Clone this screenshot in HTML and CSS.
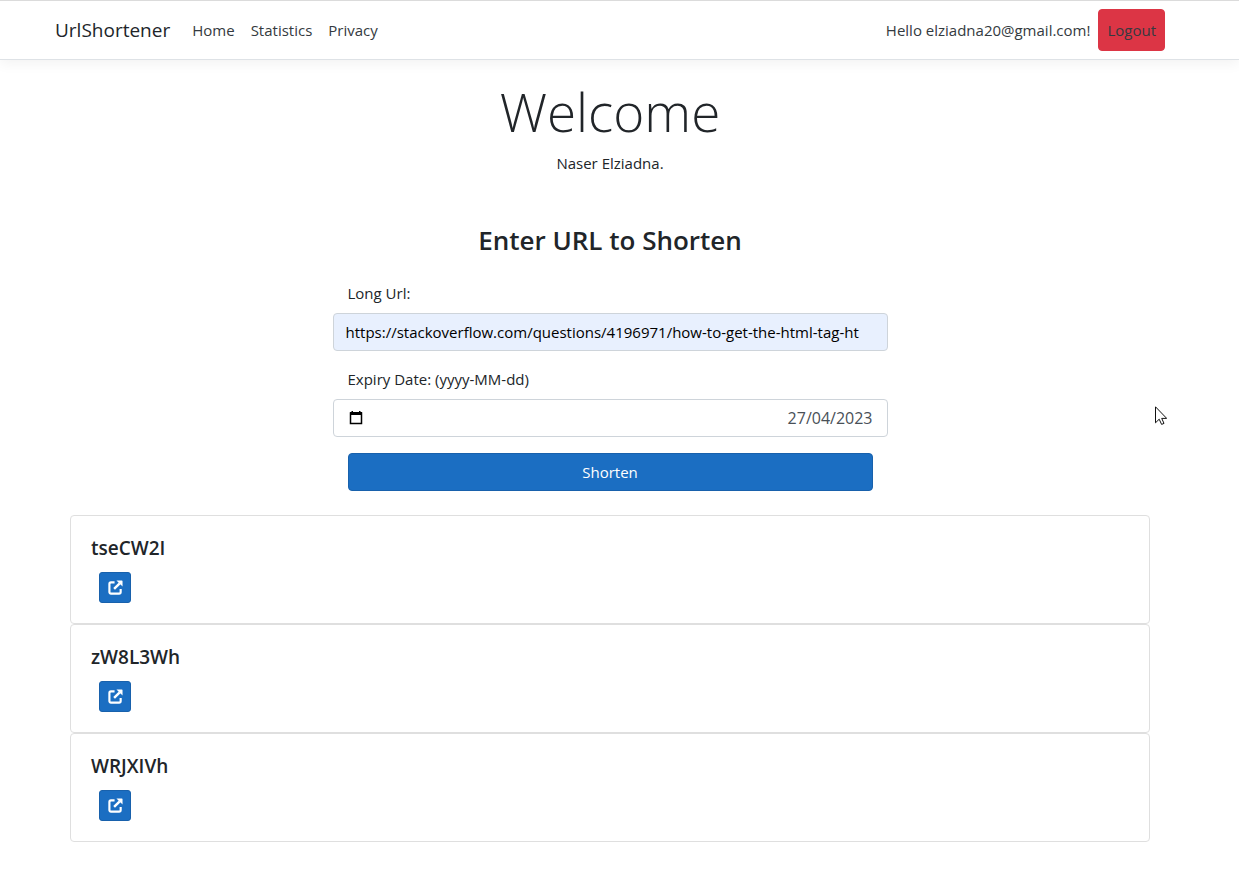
FILE: index.html
```html
<!DOCTYPE html>
<html lang="en">
<head>
<meta charset="utf-8">
<title>Home Page - UrlShortener</title>
<link rel="stylesheet" href="styles.css">
</head>
<body>
<svg class="sprite" aria-hidden="true">
  <symbol id="open-link" viewBox="0 0 16 16">
    <path d="M7 2.5H3.2a1.7 1.7 0 0 0-1.7 1.7v8.600a1.7 1.7 0 0 0 1.7 1.7h8.600a1.7 1.7 0 0 0 1.7-1.700V9.500" fill="none" stroke="currentColor" stroke-width="2.300"/>
    <path d="M6.500 9.500 12.500 3.500" fill="none" stroke="currentColor" stroke-width="2.600"/>
    <path d="M9 .5h5.800a.7.7 0 0 1 .7.7V7z" fill="currentColor"/>
  </symbol>
</svg>
<header class="site-header">
  <nav class="container navbar">
    <a class="brand" href="#">UrlShortener</a>
    <div class="nav-links">
      <a href="#">Home</a>
      <a href="#">Statistics</a>
      <a href="#">Privacy</a>
    </div>
    <div class="account">
      <a class="greeting" href="#">Hello elziadna20@gmail.com!</a>
      <button class="logout" type="button">Logout</button>
    </div>
  </nav>
</header>
<div class="page">
<main class="container">
  <section class="intro">
    <h1>Welcome</h1>
    <p>Naser Elziadna.</p>
  </section>
  <form class="shorten-form">
    <h2>Enter URL to Shorten</h2>
    <label for="long-url">Long Url:</label>
    <input class="field autofilled" id="long-url" type="text" value="https://stackoverflow.com/questions/4196971/how-to-get-the-html-tag-ht">
    <label for="expiry">Expiry Date: (yyyy-MM-dd)</label>
    <div class="field date-field">
      <button class="calendar" type="button" aria-label="Choose date">
        <svg viewBox="0 0 14 16"><path d="M1.5 3h11v10.5h-11z" fill="none" stroke="currentColor" stroke-width="1.5"/><path d="M1 2h12v3H1zM2.5 1H4v2H2.500zM10 1h1.500v2H10z" fill="currentColor"/></svg>
      </button>
      <input id="expiry" type="text" value="27/04/2023">
    </div>
    <button class="submit" type="submit">Shorten</button>
  </form>
  <section class="cards">
    <article class="card"><h3>tseCW2I</h3><a class="open" href="#" aria-label="Open tseCW2I"><svg><use href="#open-link"/></svg></a></article>
    <article class="card"><h3>zW8L3Wh</h3><a class="open" href="#" aria-label="Open zW8L3Wh"><svg><use href="#open-link"/></svg></a></article>
    <article class="card"><h3>WRJXIVh</h3><a class="open" href="#" aria-label="Open WRJXIVh"><svg><use href="#open-link"/></svg></a></article>
  </section>
</main>
</div>
<svg class="pointer" viewBox="0 0 12 20" aria-hidden="true"><path d="M.5.8v16l3.700-3.600 2.400 5.200 2.400-1-2.300-5h5z" fill="#fff" stroke="#111" stroke-width="1"/></svg>
</body>
</html>
```
FILE: styles.css
```css
*, *::before, *::after { box-sizing: border-box; }

body {
  margin: 0;
  background: #fff;
  color: #212529;
  font: 15px/24px "Segoe UI", "Open Sans", "Noto Sans", sans-serif;
}

h1, h2, h3, p { margin: 0; }
a { color: inherit; text-decoration: none; }
button, input { font: inherit; }
button { cursor: pointer; }
.sprite { display: none; }

.site-header {
  border-top: 1px solid #dbdbdb;
  border-bottom: 1px solid #dee2e6;
  box-shadow: 0 4px 12px rgba(0, 0, 0, .05);
}

.site-header, .page { padding-right: 19px; }

.container {
  width: 100%;
  max-width: 1140px;
  margin: 0 auto;
  padding: 0 15px;
}

.navbar {
  display: flex;
  align-items: center;
  min-height: 58px;
  color: #343a40;
}

.brand {
  margin-right: 22px;
  color: #212529;
  font-size: 19px;
}

.nav-links { display: flex; gap: 16px; }

.account {
  display: flex;
  align-items: center;
  gap: 8px;
  margin-left: auto;
}

.logout {
  height: 42px;
  padding: 0 8px;
  border: 1px solid #dc3545;
  border-radius: 4px;
  background: #dc3545;
  color: #343a40;
}

.intro {
  padding-top: 18px;
  text-align: center;
}

.intro h1 {
  margin-bottom: 6px;
  font-size: 53px;
  font-weight: 300;
  line-height: 67px;
}

.shorten-form {
  display: flex;
  flex-direction: column;
  width: 50%;
  margin: 48px auto 24px;
}

.shorten-form h2 {
  margin-bottom: 24px;
  font-size: 26px;
  font-weight: 600;
  line-height: 34px;
  text-align: center;
}

.shorten-form label { margin: 0 15px 8px; }

.field {
  width: 100%;
  height: 38px;
  margin-bottom: 16px;
  padding: 0 12px;
  border: 1px solid #ced4da;
  border-radius: 4px;
  background: #fff;
}

.autofilled { background: #e8f0fe; color: #000; }

.date-field { display: flex; align-items: center; padding: 0 14px; }

.date-field input {
  flex: 1;
  min-width: 0;
  padding: 0;
  border: 0;
  background: none;
  color: #495057;
  font-size: 16px;
  text-align: right;
}

.calendar {
  display: flex;
  padding: 0;
  border: 0;
  background: none;
  color: #000;
}

.calendar svg { width: 16px; height: 16px; }

.submit {
  height: 38px;
  margin: 0 15px;
  border: 1px solid #1861ac;
  border-radius: 4px;
  background: #1b6ec2;
  color: #fff;
}

.cards { padding: 0 15px; }

.card {
  min-height: 109px;
  padding: 20px;
  border: 1px solid #dfdfdf;
  border-radius: 4px;
}

.card h3 {
  margin-bottom: 12px;
  font-size: 19px;
  font-weight: 600;
  line-height: 24px;
}

.open {
  display: flex;
  align-items: center;
  justify-content: center;
  width: 32px;
  height: 31px;
  margin-left: 8px;
  border: 1px solid #1861ac;
  border-radius: 3px;
  background: #1b6ec2;
  color: #fff;
}

.open svg { width: 15px; height: 15px; }

.pointer {
  position: absolute;
  left: 1155px;
  top: 406px;
  width: 12px;
  height: 20px;
}
```
